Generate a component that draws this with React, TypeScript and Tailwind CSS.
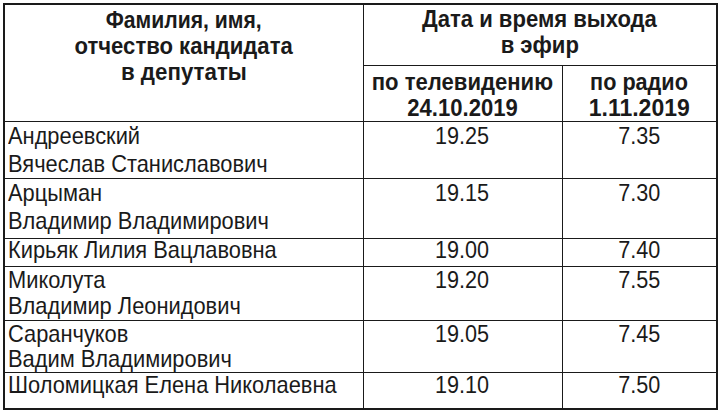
const rows = [
  { name: ["Андреевский", "Вячеслав Станиславович"], tv: "19.25", radio: "7.35", tr: "h-[57px] leading-[28px]" },
  { name: ["Арцыман", "Владимир Владимирович"], tv: "19.15", radio: "7.30", tr: "h-[60px] leading-[28px]" },
  { name: ["Кирьяк Лилия Вацлавовна"], tv: "19.00", radio: "7.40", tr: "h-[28px] leading-[22px]" },
  { name: ["Миколута", "Владимир Леонидович"], tv: "19.20", radio: "7.55", tr: "h-[54px] leading-[26px]" },
  { name: ["Саранчуков", "Вадим Владимирович"], tv: "19.05", radio: "7.45", tr: "h-[52px] leading-[25px]" },
  { name: ["Шоломицкая Елена Николаевна"], tv: "19.10", radio: "7.50", tr: "h-[37px] leading-[24px]" },
];

const cell = "border border-[#1a1a1a] p-0 align-top";

export default function App() {
  return (
    <div className="h-[414px] w-[721px] bg-white pt-[3px] pl-[3px] font-['Liberation_Sans',Arial,sans-serif] text-[#1a1a1a]">
      <table className="w-[713px] table-fixed border-collapse border-2 border-[#1a1a1a]">
        <colgroup>
          <col className="w-[359px]" />
          <col className="w-[199px]" />
          <col className="w-[155px]" />
        </colgroup>
        <thead className="text-[23px] font-bold leading-[26px]">
          <tr className="h-[61px]">
            <th rowSpan={2} className={`${cell} pt-[2px] text-center`}>
              <span className="inline-block scale-x-[0.92] whitespace-nowrap">Фамилия, имя,</span>
              <br />
              <span className="inline-block scale-x-[0.96] whitespace-nowrap">отчество кандидата</span>
              <br />
              <span className="inline-block scale-x-[0.97] whitespace-nowrap">в депутаты</span>
            </th>
            <th colSpan={2} className={`${cell} pt-[1px] text-center`}>
              <span className="inline-block scale-x-[0.96] whitespace-nowrap">Дата и время выхода</span>
              <br />
              <span className="inline-block scale-x-[0.96] whitespace-nowrap">в эфир</span>
            </th>
          </tr>
          <tr className="h-[55px]">
            <th className={`${cell} pt-[3px] text-center`}>
              <span className="inline-block scale-x-[0.96] whitespace-nowrap">по телевидению</span>
              <br />
              <span className="inline-block scale-x-[0.96] whitespace-nowrap">24.10.2019</span>
            </th>
            <th className={`${cell} pt-[3px] text-center`}>
              <span className="inline-block scale-x-[0.94] whitespace-nowrap">по радио</span>
              <br />
              <span className="inline-block whitespace-nowrap">1.11.2019</span>
            </th>
          </tr>
        </thead>
        <tbody className="text-[24px]">
          {rows.map((r) => (
            <tr key={r.tv} className={r.tr}>
              <td className={`${cell} pl-[3px]`}>
                {r.name.map((n) => (
                  <div key={n} className="origin-left scale-x-[0.91] whitespace-nowrap">
                    {n}
                  </div>
                ))}
              </td>
              <td className={`${cell} text-center`}>
                <span className="inline-block scale-x-[0.9]">{r.tv}</span>
              </td>
              <td className={`${cell} text-center`}>
                <span className="inline-block scale-x-[0.9]">{r.radio}</span>
              </td>
            </tr>
          ))}
        </tbody>
      </table>
    </div>
  );
}
